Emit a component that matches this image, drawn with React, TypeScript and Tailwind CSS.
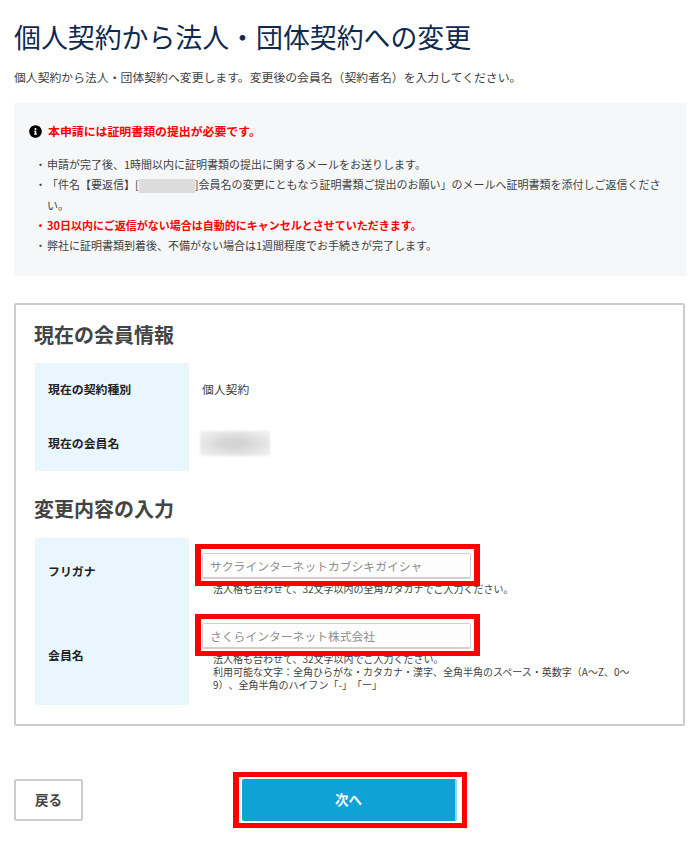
import type { ReactNode } from "react";
import { FaInfoCircle } from "react-icons/fa";

function Row({ label, className, labelClass = "pb-[2px]", children }: { label: string; className: string; labelClass?: string; children: ReactNode }) {
  return (
    <div className={`flex ${className}`}>
      <div className={`w-[154px] shrink-0 bg-[#e9f6fd] pl-[13px] flex items-center text-[11.9px] font-bold text-[#222] ${labelClass}`}>{label}</div>
      <div className="flex-1">{children}</div>
    </div>
  );
}

function Field({ placeholder, top }: { placeholder: string; top: string }) {
  return (
    <div className={`relative ml-[13px] w-[269px] h-[26px] ${top}`}>
      <input
        readOnly
        placeholder={placeholder}
        className="w-full h-full bg-[#fdfdfd] border border-[#d0d0d0] border-b-2 rounded-[2px] pl-[7px] pr-[4px] text-[11.8px] text-[#333] placeholder:text-[#8f8f8f] outline-none"
      />
      <div className="absolute -left-[7px] -right-[9px] -top-[8px] -bottom-[8px] border-x-[6px] border-y-[5px] border-[#ff0000] pointer-events-none" />
    </div>
  );
}

function Bullet({ children, className = "" }: { children: ReactNode; className?: string }) {
  return (
    <li className={`flex ${className}`}>
      <span className="w-[18px] shrink-0 pl-[5px] text-center">・</span>
      <span>{children}</span>
    </li>
  );
}

export default function App() {
  return (
    <div className="w-[700px] h-[842px] bg-white overflow-hidden pl-[14px] text-[#3f3f3f] [text-spacing-trim:space-all] font-['Noto_Sans_CJK_JP','Liberation_Sans',sans-serif]">
      <h1 className="pt-[18px] text-[26.9px] leading-[38px] font-normal text-[#0f2a4f]">個人契約から法人・団体契約への変更</h1>
      <p className="mt-[11px] text-[11.85px] leading-[20px]">個人契約から法人・団体契約へ変更します。変更後の会員名（契約者名）を入力してください。</p>

      <div className="mt-[16px] w-[673px] h-[173px] bg-[#f5f7f9] rounded-[2px] pt-[18px] pl-[15px] pr-[22px]">
        <div className="flex items-center h-[20px] text-[11.9px] font-bold text-[#ff0000]">
          <FaInfoCircle className="w-[13px] h-[13px] text-black mr-[6px]" />
          本申請には証明書類の提出が必要です。
        </div>
        <ul className="mt-[13px] text-[11px] leading-[20.25px]">
          <Bullet>申請が完了後、1時間以内に証明書類の提出に関するメールをお送りします。</Bullet>
          <Bullet>
            「件名【要返信】[<span className="inline-block align-middle w-[56px] h-[14px] bg-[#dcdcdc] blur-[0.6px]" />]会員名の変更にともなう証明書類ご提出のお願い」のメールへ証明書類を添付しご返信ください。
          </Bullet>
          <Bullet className="font-bold text-[#ff0000]">30日以内にご返信がない場合は自動的にキャンセルとさせていただきます。</Bullet>
          <Bullet>弊社に証明書類到着後、不備がない場合は1週間程度でお手続きが完了します。</Bullet>
        </ul>
      </div>

      <div className="mt-[27px] w-[671px] h-[423px] border-2 border-[#ccc] rounded-[2px] pl-[19px] pt-[15px]">
        <h2 className="-ml-[1px] text-[20px] leading-[30px] font-bold text-[#444]">現在の会員情報</h2>
        <div className="mt-[13px] w-[616px]">
          <Row label="現在の契約種別" className="h-[54px]">
            <div className="h-full flex items-center pl-[13px] pb-[2px] text-[11.8px]">個人契約</div>
          </Row>
          <Row label="現在の会員名" className="h-[54px]">
            <div className="h-[54px] pl-[11px] pt-[14px]">
              <div className="w-[70px] h-[25px] bg-[radial-gradient(ellipse_at_center,#d4d4d4_20%,#f0f0f0_90%)] blur-[1px]" />
            </div>
          </Row>
        </div>
        <h2 className="-ml-[1px] mt-[23px] text-[20px] leading-[30px] font-bold text-[#444]">変更内容の入力</h2>
        <div className="mt-[14px] w-[616px]">
          <Row label="フリガナ" className="h-[66px]" labelClass="">
            <Field placeholder="サクラインターネットカブシキガイシャ" top="mt-[14px]" />
            <p className="ml-[24px] mt-[4px] text-[10px] leading-[13px]">法人格も合わせて、32文字以内の全角カタカナでご入力ください。</p>
          </Row>
          <Row label="会員名" className="h-[101px]" labelClass="">
            <Field placeholder="さくらインターネット株式会社" top="mt-[18px]" />
            <p className="ml-[24px] mt-[4px] w-[426px] text-[10px] leading-[13px]">法人格も合わせて、32文字以内でご入力ください。<br />利用可能な文字：全角ひらがな・カタカナ・漢字、全角半角のスペース・英数字（A～Z、0～9）、全角半角のハイフン「-」「ー」</p>
          </Row>
        </div>
      </div>

      <div className="mt-[53px] flex w-[671px]">
        <button className="w-[69px] h-[42px] border-2 border-[#ccc] rounded-[2px] bg-white text-[13.5px] font-bold text-[#444] pb-[2px]">戻る</button>
        <div className="relative ml-[159px]">
          <button className="block w-[215px] h-[42px] bg-[#0ea2d6] border-r-2 border-[#8fd6ef] rounded-[2px] text-[13.5px] font-bold text-white pb-[2px]">次へ</button>
          <div className="absolute -left-[9px] -right-[10px] -top-[7px] -bottom-[7px] border-l-[6px] border-r-[5px] border-y-[5px] border-[#ff0000] pointer-events-none" />
        </div>
      </div>
    </div>
  );
}
